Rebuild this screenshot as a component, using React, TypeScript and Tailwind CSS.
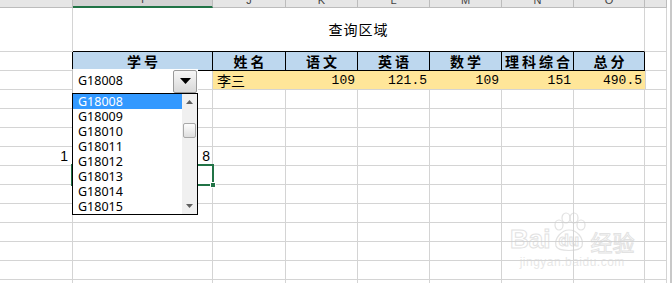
import React from 'react'

// Excel-like sheet: query area with a validation dropdown open on 学号

const COLS = [
  { key: 'H', w: 'w-[73px]', letter: '' },
  { key: 'I', w: 'w-[140px]', letter: 'I' },
  { key: 'J', w: 'w-[73px]', letter: 'J' },
  { key: 'K', w: 'w-[72px]', letter: 'K' },
  { key: 'L', w: 'w-[72px]', letter: 'L' },
  { key: 'M', w: 'w-[72px]', letter: 'M' },
  { key: 'N', w: 'w-[72px]', letter: 'N' },
  { key: 'O', w: 'w-[71px]', letter: 'O' },
  { key: 'P', w: 'w-[22px]', letter: '' },
]

const HEADS = ['学号', '姓名', '语文', '英语', '数学', '理科综合', '总分']
const VALUES = ['109', '121.5', '109', '151', '490.5']
const IDS = ['G18008', 'G18009', 'G18010', 'G18011', 'G18012', 'G18013', 'G18014', 'G18015']

const GRID = 'h-full shrink-0 border-r border-b border-[#d4d4d4]'

function PlainRow({ note }: { note?: boolean }) {
  return (
    <div className="flex h-[19px] shrink-0">
      {COLS.map(c => (
        <div key={c.key} className={`${c.w} ${GRID} flex items-end justify-end`}>
          {note && c.key === 'H' && <span className="pr-[4px] text-[14px] leading-[17px]">1</span>}
          {note && c.key === 'I' && <span className="pr-[2px] text-[14px] leading-[17px]">8</span>}
        </div>
      ))}
    </div>
  )
}

export default function App() {
  return (
    <div className="relative w-[672px] h-[283px] overflow-hidden bg-white text-black font-['Liberation_Sans','Noto_Sans_CJK_SC',sans-serif]">
      <div className="flex">
        <div className="flex flex-col">
          {/* column letters, mostly scrolled off */}
          <div className="flex h-[8px] shrink-0">
            {COLS.map(c => (
              <div
                key={c.key}
                className={
                  c.key === 'I'
                    ? `${c.w} h-full shrink-0 overflow-hidden border-r border-[#bcbcbc] border-b-2 border-b-[#217346] bg-[#d3d3d3] flex items-end justify-center`
                    : `${c.w} h-full shrink-0 overflow-hidden border-r border-b border-[#bcbcbc] bg-[#e6e6e6] flex items-end justify-center`
                }
              >
                <span className="text-[11px] leading-[11px] text-[#444] mb-[1px]">{c.letter}</span>
              </div>
            ))}
          </div>

          {/* row 1: merged title */}
          <div className="flex h-[44px] shrink-0">
            <div className={`w-[73px] ${GRID}`} />
            <div className="w-[572px] h-full shrink-0 border-r border-[#d4d4d4] border-b border-b-black flex items-center justify-center">
              <span className="font-['Noto_Sans_CJK_SC',sans-serif] text-[14px] tracking-[1px]">查询区域</span>
            </div>
            <div className={`w-[22px] ${GRID}`} />
          </div>

          {/* row 2: table headers */}
          <div className="flex h-[19px] shrink-0">
            <div className="w-[73px] h-full shrink-0 border-r border-r-black border-b border-[#d4d4d4]" />
            {COLS.slice(1, 8).map((c, i) => (
              <div key={c.key} className={`${c.w} h-full shrink-0 border-r border-b border-black bg-[#bdd7ee] flex items-center justify-center`}>
                <span className="font-['Noto_Sans_CJK_SC',sans-serif] font-bold text-[14px] leading-none tracking-[3px] pl-[3px]">{HEADS[i]}</span>
              </div>
            ))}
            <div className={`w-[22px] ${GRID}`} />
          </div>

          {/* row 3: result row */}
          <div className="flex h-[19px] shrink-0">
            <div className={`w-[73px] ${GRID}`} />
            <div className={`w-[140px] ${GRID}`} />
            <div className="w-[73px] h-full shrink-0 border-b border-[#d4d4d4] bg-[#ffe699] flex items-center pl-[4px]">
              <span className="font-['Noto_Sans_CJK_SC',sans-serif] text-[14px] leading-none">李三</span>
            </div>
            {COLS.slice(3, 8).map((c, i) => (
              <div key={c.key} className={`${c.w} h-full shrink-0 border-b border-[#d4d4d4] bg-[#ffe699] flex items-center justify-end pr-[3px]`}>
                <span className="font-['Liberation_Mono',monospace] text-[13px] leading-none">{VALUES[i]}</span>
              </div>
            ))}
            <div className={`w-[22px] ${GRID} border-l border-l-[#d4d4d4]`} />
          </div>

          {Array.from({ length: 11 }).map((_, i) => (
            <PlainRow key={i} note={i === 3} />
          ))}
        </div>
        <div className="w-[5px] h-[283px] shrink-0 bg-white border-r-2 border-[#c8c8c8]" />
      </div>

      {/* active cell outline */}
      <div className="absolute left-[71px] top-[164px] w-[143px] h-[22px] border-2 border-[#217346]" />
      <div className="absolute left-[210px] top-[182px] w-[6px] h-[6px] bg-[#217346] border border-white" />

      {/* validation combobox */}
      <div className="absolute left-[72px] top-[69px] w-[126px] h-[24px] bg-white border-l border-[#c0c0c0] flex items-center">
        <span className="pl-[5px] flex-1 font-['Noto_Sans',sans-serif] text-[12.5px] leading-none">G18008</span>
        <div className="w-[24px] h-[23px] mr-[1px] rounded-[2px] border border-[#9a9a9a] bg-gradient-to-b from-[#f7f7f7] to-[#d9d9d9] flex items-center justify-center">
          <svg width="11" height="6" viewBox="0 0 11 6"><path d="M0 0 H11 L5.5 6 Z" fill="#000" /></svg>
        </div>
      </div>

      {/* dropdown list */}
      <div className="absolute left-[72px] top-[93px] w-[126px] h-[122px] bg-white border border-black flex">
        <div className="flex-1 flex flex-col font-['Noto_Sans',sans-serif] text-[12.5px]">
          {IDS.map((id, i) => (
            <div
              key={id}
              className={i === 0 ? 'h-[15px] leading-[15px] pl-[5px] bg-[#3399ff] text-white overflow-hidden' : 'h-[15px] leading-[15px] pl-[5px] overflow-hidden'}
            >
              {id}
            </div>
          ))}
        </div>
        <div className="w-[15px] h-full bg-[#f0f0f0] flex flex-col items-center">
          <div className="h-[15px] flex items-center justify-center">
            <svg width="7" height="4" viewBox="0 0 7 4"><path d="M0 4 L3.5 0 L7 4 Z" fill="#606060" /></svg>
          </div>
          <div className="h-[14px]" />
          <div className="w-[13px] h-[15px] rounded-[2px] border border-[#a8a8a8] bg-gradient-to-b from-[#fdfdfd] to-[#dedede]" />
          <div className="flex-1" />
          <div className="h-[16px] flex items-center justify-center">
            <svg width="7" height="4" viewBox="0 0 7 4"><path d="M0 0 L7 0 L3.5 4 Z" fill="#606060" /></svg>
          </div>
        </div>
      </div>

      {/* watermark */}
      <div className="absolute left-[510px] top-[212px] flex flex-col items-center opacity-60">
        <div className="flex items-end">
          <span className="text-[26px] leading-none font-bold text-transparent [-webkit-text-stroke:1px_#cfcfcf]">Bai</span>
          <div className="relative w-[38px] h-[40px]">
            <svg width="38" height="40" viewBox="0 0 38 40" className="absolute inset-0">
              <g fill="none" stroke="#cfcfcf" strokeWidth="1.2">
                <ellipse cx="9" cy="13" rx="4" ry="5" />
                <ellipse cx="16" cy="6" rx="4" ry="5" />
                <ellipse cx="24" cy="6" rx="4" ry="5" />
                <ellipse cx="31" cy="13" rx="4" ry="5" />
                <path d="M6 34 C4 26 12 18 19 18 C27 18 34 26 32 34 C30 40 8 40 6 34 Z" />
              </g>
            </svg>
            <span className="absolute left-[8px] top-[20px] text-[17px] leading-none font-bold text-transparent [-webkit-text-stroke:1px_#cfcfcf]">du</span>
          </div>
          <span className="ml-[2px] font-['Noto_Sans_CJK_SC',sans-serif] text-[22px] leading-none text-transparent [-webkit-text-stroke:1px_#cfcfcf]">经验</span>
        </div>
        <span className="mt-[4px] text-[12px] leading-none text-[#d8d8d8] tracking-[0.5px]">jingyan.baidu.com</span>
      </div>
    </div>
  )
}
